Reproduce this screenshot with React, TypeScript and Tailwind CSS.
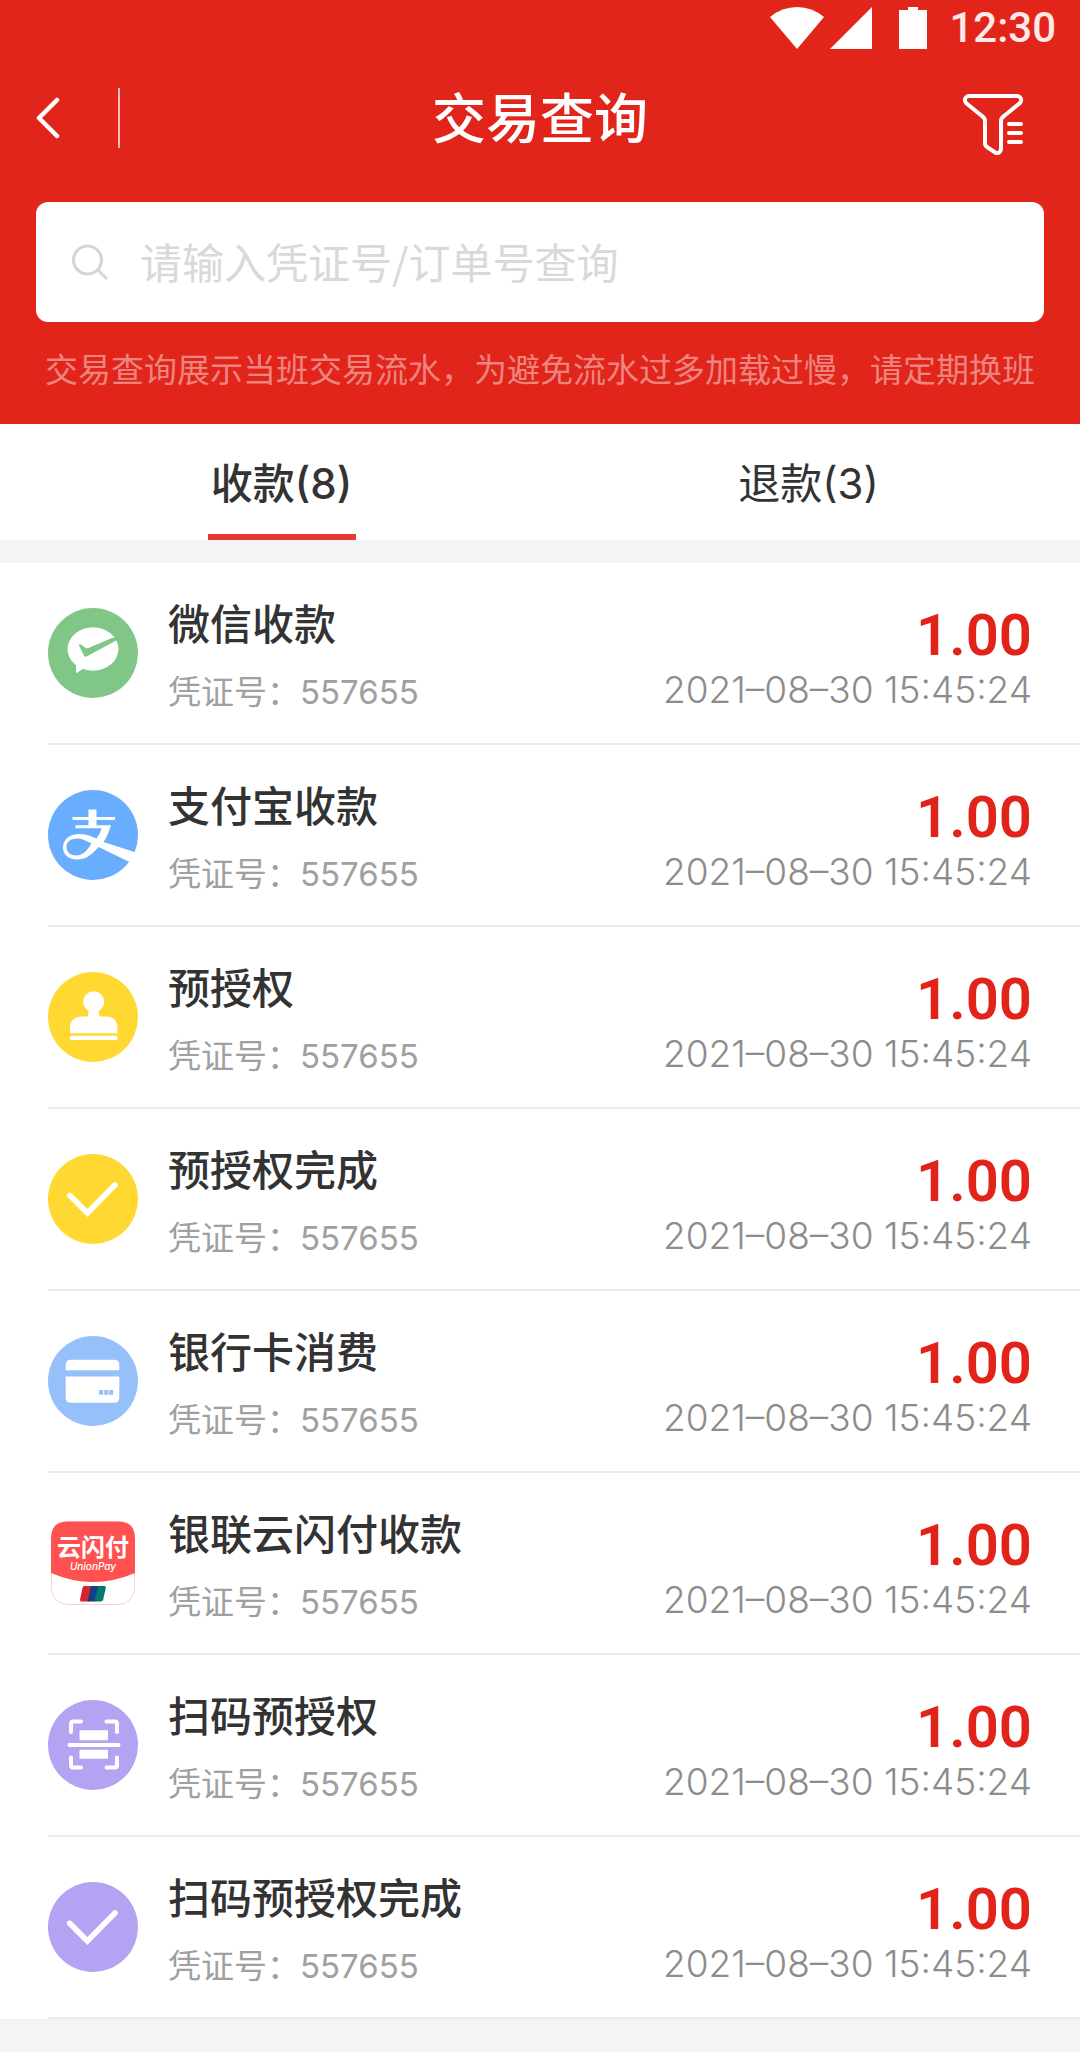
import { useState } from 'react';
import type { ReactNode } from 'react';

type IconType = 'wechat' | 'alipay' | 'stamp' | 'check' | 'card' | 'unionpay' | 'scan';

interface Transaction {
  id: number;
  name: string;
  icon: IconType;
  color: string;
  voucher: string;
  amount: string;
  time: string;
}

const TABS = [
  { key: 'receipt', label: '收款', count: 8 },
  { key: 'refund', label: '退款', count: 3 },
];

const base = { voucher: '557655', amount: '1.00', time: '2021–08–30 15:45:24' };

const TRANSACTIONS: Transaction[] = [
  { id: 1, name: '微信收款', icon: 'wechat', color: 'text-[#7fc687]', ...base },
  { id: 2, name: '支付宝收款', icon: 'alipay', color: 'text-[#69adfe]', ...base },
  { id: 3, name: '预授权', icon: 'stamp', color: 'text-[#ffd932]', ...base },
  { id: 4, name: '预授权完成', icon: 'check', color: 'text-[#ffd932]', ...base },
  { id: 5, name: '银行卡消费', icon: 'card', color: 'text-[#96c0f9]', ...base },
  { id: 6, name: '银联云闪付收款', icon: 'unionpay', color: 'text-[#ff5150]', ...base },
  { id: 7, name: '扫码预授权', icon: 'scan', color: 'text-[#b4a3f3]', ...base },
  { id: 8, name: '扫码预授权完成', icon: 'check', color: 'text-[#b4a3f3]', ...base },
];

const ICONS: Record<IconType, ReactNode> = {
  wechat: (
    <>
      <circle cx="45" cy="45" r="45" fill="currentColor" />
      <ellipse cx="45" cy="41" rx="25.5" ry="21.7" fill="#fff" />
      <path d="M28 55v9q0 1.500 1.500 .5L36 60Z" fill="#fff" />
      <path
        d="M31 37.500q0-2 2-1l4 3q1.500 1.200 3.500.5L64 30l3-.5 3 2L38.500 48.500q-1.800.8-2.500-1Z"
        fill="currentColor"
      />
    </>
  ),
  alipay: (
    <>
      <circle cx="45" cy="45" r="45" fill="currentColor" />
      <path
        d="M40.500 19.500h8V27H67v3H48.500v5.300H63C61 42 58.500 47.500 55.500 52L88 62.500 81.500 72 50.500 57C44 65 37 69.500 29.500 69.500 20 69.500 15 64 15 57.500 15 49 22.500 44 31 44c6 0 12 2 17.500 4.500 2.500-3.500 4-6.500 5-10.200H27.500v-3h13V30H24.500v-3h16ZM43.500 53.500C38 50.500 34 48.500 29 48.500c-6.500 0-10.500 3.500-10.500 8.500 0 5 4 8.500 10 8.500 6 0 11-5 15-12Z"
        fill="#fff"
        fillRule="evenodd"
      />
    </>
  ),
  stamp: (
    <>
      <circle cx="45" cy="45" r="45" fill="currentColor" />
      <g fill="#fff">
        <circle cx="45.700" cy="29.800" r="10.500" />
        <path d="M40.500 36h10.500v6q0 2.500 2.500 2.500h4.500Q69.500 45 69.500 56v5.200H22V56Q22 45 33.500 44.500h4.500q2.500 0 2.500-2.500Z" />
        <rect x="22" y="63.700" width="47.500" height="4.300" rx="1" />
      </g>
    </>
  ),
  check: (
    <>
      <circle cx="45" cy="45" r="45" fill="currentColor" />
      <path d="M21.700 41.300 39.300 59 67 31" fill="none" stroke="#fff" strokeWidth="5.500" strokeLinecap="round" />
    </>
  ),
  card: (
    <>
      <circle cx="45" cy="45" r="45" fill="currentColor" />
      <path d="M17.700 34.300V29q0-5.300 5.300-5.300h43q5.300 0 5.300 5.300v5.300ZM17.700 40.500h53.600v21q0 5.300-5.300 5.300H23q-5.300 0-5.300-5.300Z" fill="#fff" />
      <path d="M51 54h4.200v4.700H51ZM56.200 54h4.200v4.700h-4.200ZM61.200 54h4v4.700h-4Z" fill="currentColor" />
    </>
  ),
  unionpay: (
    <>
      <rect x="3.500" y="4" width="83" height="82.500" rx="16" fill="#fff" stroke="#f9cfd0" />
      <path d="M3 55V20Q3 3.500 19.500 3.500h51Q87 3.500 87 20v35Q66 64 45 64T3 55Z" fill="currentColor" />
      <text x="45" y="38" textAnchor="middle" fontSize="24" fontWeight="700" fill="#fff">
        云闪付
      </text>
      <text x="45" y="52" textAnchor="middle" fontSize="10" fontStyle="italic" fontWeight="500" fill="#fff">
        UnionPay
      </text>
      <path d="M36 68h8l-3 15.500h-7.500q-2 0-1.500-2l2.500-11.500q.4-2 1.500-2Z" fill="#d8232f" />
      <path d="M43 68h8l-3.500 15.500H39.500Z" fill="#123f88" />
      <path d="M50 68h6.500q1.700 0 1.300 2l-2.600 11.500q-.5 2-2.500 2h-6.200Z" fill="#07786f" />
    </>
  ),
  scan: (
    <>
      <circle cx="45" cy="45" r="45" fill="currentColor" />
      <path
        d="M23 32v-8q0-2.500 2.500-2.500H33M58.500 21.500H67q2 0 2 2.500v8M69 57.500V65q0 2.500-2 2.500h-8.500M33 67.500h-7.500Q23 67.500 23 65v-7.500M21.500 45h49"
        fill="none"
        stroke="#fff"
        strokeWidth="4"
        strokeLinecap="round"
      />
      <path d="M31.500 30.300H60v10H31.500ZM31.500 49.700H60v9H31.500Z" fill="#fff" />
    </>
  ),
};

const StatusBar = () => (
  <div className="flex h-14 items-center justify-end pr-6 font-[Roboto,sans-serif] text-[42px] leading-none">
    <svg className="h-[42px] w-[54px]" viewBox="0 0 54 42" fill="currentColor" aria-hidden="true">
      <path d="M0 10Q12 0 27 0t27 10L27 42Z" />
    </svg>
    <svg className="ml-1.5 h-[42px] w-[42px]" viewBox="0 0 42 42" fill="currentColor" aria-hidden="true">
      <path d="M42 0v42H0Z" />
    </svg>
    <svg className="ml-[27px] h-[42px] w-7" viewBox="0 0 28 42" fill="currentColor" aria-hidden="true">
      <path d="M9 0h10v3h9v39H0V3h9Z" />
    </svg>
    <span className="ml-[22px] font-medium text-white/90">12:30</span>
  </div>
);

const TitleBar = () => (
  <div className="flex h-[124px] items-center justify-between">
    <div className="flex w-[84px] items-center justify-between">
      <button type="button" aria-label="返回">
        <svg className="h-[42px] w-6" viewBox="0 0 24 42" fill="none" stroke="currentColor" strokeWidth="4.500" strokeLinecap="round" strokeLinejoin="round">
          <path d="M21 3 3 21l18 18" />
        </svg>
      </button>
      <span className="h-[60px] w-0.5 bg-white/70" />
    </div>
    <h1 className="pt-1 text-[54px] leading-[60px] font-medium">交易查询</h1>
    <div className="flex w-[84px] justify-start">
      <button type="button" aria-label="筛选">
        <svg className="h-[74px] w-[66px]" viewBox="0 0 66 74" fill="none" stroke="currentColor" strokeWidth="4" strokeLinecap="round" strokeLinejoin="round">
          <path d="M8 15h50q5 2 2 7L44 35q-3 2-3 5v28q-1 5-5 4l-9-6q-2-1-2-4V40q0-3-3-5L6 22Q3 17 8 15Z" />
          <path d="M49 43h12M49 52h12M49 61h12" />
        </svg>
      </button>
    </div>
  </div>
);

const SearchBox = () => (
  <label className="mt-[22px] flex h-[120px] items-center rounded-xl bg-white pl-9">
    <svg className="h-9 w-9" viewBox="0 0 36 36" fill="none" stroke="#d5d5d5" strokeWidth="3" strokeLinecap="round" aria-hidden="true">
      <circle cx="15.500" cy="16" r="14" />
      <path d="m26 26 8 8" />
    </svg>
    <input
      type="search"
      aria-label="搜索"
      placeholder="请输入凭证号/订单号查询"
      className="ml-8 h-full min-w-0 flex-1 bg-transparent pb-1 font-['Noto_Sans_CJK_SC',sans-serif] text-[42px] text-[#333] outline-none placeholder:text-[#d9d9d9]"
    />
  </label>
);

const TransactionItem = ({ item }: { item: Transaction }) => (
  <li className="flex h-[182px] border-b-2 border-[#ebebeb] pr-12">
    <svg className={`h-[90px] w-[90px] shrink-0 self-center ${item.color}`} viewBox="0 0 90 90" aria-hidden="true">
      {ICONS[item.icon]}
    </svg>
    <div className="ml-[30px] flex-1 pt-[38px]">
      <h2 className="text-[42px] leading-[48px] font-medium text-[#333]">{item.name}</h2>
      <p className="mt-[22px] text-[33px] leading-[42px] text-[#a0a0a0]">凭证号：{item.voucher}</p>
    </div>
    <div className="pt-[38px] text-right">
      <div className="font-[Roboto,sans-serif] text-[58px] leading-[68px] font-semibold text-[#e2231a]">
        {item.amount}
      </div>
      <time className="block text-[37px] leading-[42px] font-light text-[#8c8c8c]">{item.time}</time>
    </div>
  </li>
);

export default function App() {
  const [activeTab, setActiveTab] = useState('receipt');

  return (
    <div className="min-h-screen bg-[#f4f4f4] font-[Inter,'Noto_Sans_CJK_SC',sans-serif]">
      <header className="bg-[#e1251b] text-white">
        <StatusBar />
        <div className="px-9 pb-[30px]">
          <TitleBar />
          <SearchBox />
          <p className="mt-6 text-center text-[33px] leading-[48px] whitespace-nowrap text-white/45">
            交易查询展示当班交易流水，为避免流水过多加载过慢，请定期换班
          </p>
        </div>
      </header>

      <nav className="flex h-[116px] bg-white pr-2 pl-[18px]" role="tablist">
        {TABS.map((tab) => (
          <div key={tab.key} className="flex flex-1 justify-center">
            <button
              type="button"
              role="tab"
              aria-selected={activeTab === tab.key}
              onClick={() => setActiveTab(tab.key)}
              className={`w-[148px] border-b-6 pt-2 text-[42px] whitespace-nowrap text-[#333] ${
                activeTab === tab.key ? 'border-[#e53a30] font-medium' : 'border-transparent'
              }`}
            >
              {tab.label}({tab.count})
            </button>
          </div>
        ))}
      </nav>

      <main className="mt-[23px] bg-white pl-12">
        <ul>
          {TRANSACTIONS.map((item) => (
            <TransactionItem key={item.id} item={item} />
          ))}
        </ul>
      </main>
    </div>
  );
}
